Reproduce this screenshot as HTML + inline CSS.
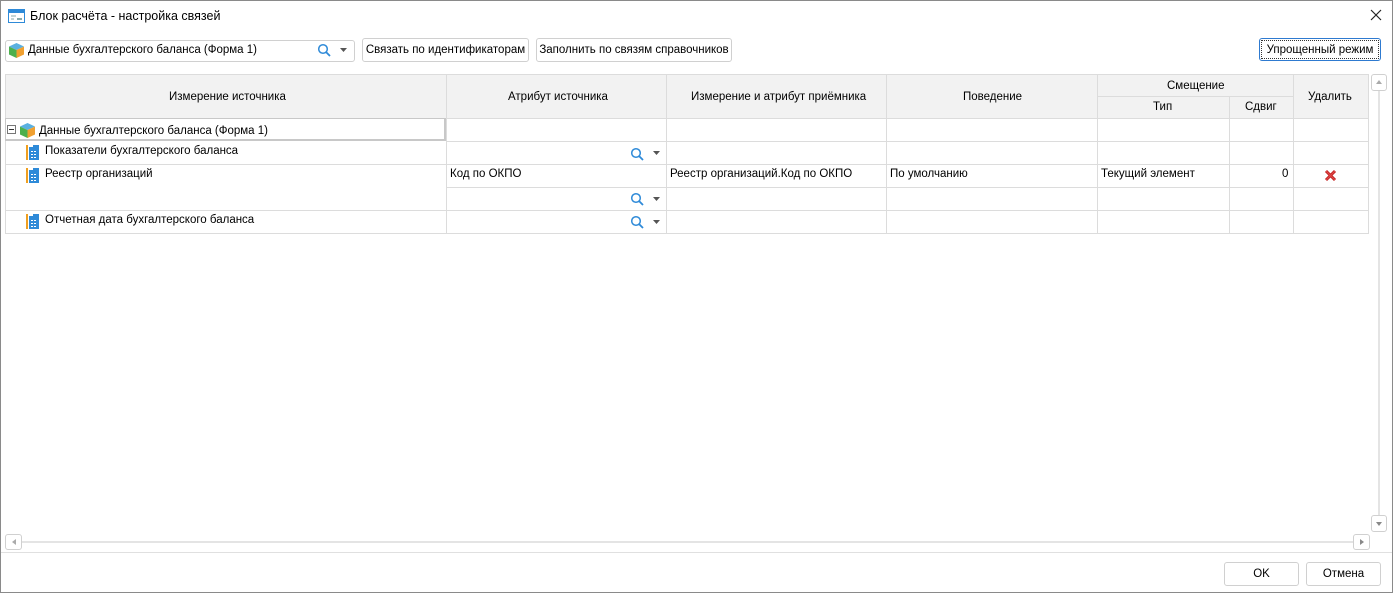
<!DOCTYPE html>
<html><head><meta charset="utf-8"><style>
*{box-sizing:border-box;margin:0;padding:0}
body{width:1393px;height:593px;background:#fff;font-family:"Liberation Sans",sans-serif;font-size:11.5px;color:#000;position:relative;overflow:hidden}
.win{position:absolute;left:0;top:0;width:1393px;height:593px;border:1px solid #8a8a8a}
.a{position:absolute}
.btn{position:absolute;border:1px solid #d0d0d0;border-radius:3px;background:#fff;text-align:center;line-height:22px;white-space:nowrap}
.vl{position:absolute;width:1px;background:#dcdcdc}
.hl{position:absolute;height:1px;background:#dcdcdc}
.t{position:absolute;white-space:nowrap}
</style></head><body><div class="win"></div>
<svg class="a" style="left:8px;top:8px" width="18" height="16"><rect x="0.5" y="1.5" width="16" height="13" fill="#fff" stroke="#2e8ad8"/><rect x="1" y="2" width="15" height="3" fill="#2e8ad8"/><line x1="3" y1="8" x2="8" y2="8" stroke="#8aa"/><line x1="3" y1="11" x2="6" y2="11" stroke="#8aa"/><rect x="9" y="10" width="5" height="2" fill="#8aa"/></svg>
<div class="t" style="left:30px;top:9px;font-size:12.5px">Блок расчёта - настройка связей</div>
<svg class="a" style="left:1370px;top:9px" width="12" height="12"><path d="M1 1L11 11M11 1L1 11" stroke="#222" stroke-width="1.2"/></svg>

<div class="btn" style="left:5px;top:40px;width:350px;height:22px;text-align:left"></div>
<svg class="a" style="left:8px;top:42px" width="17" height="17"><path d="M8.5 1L16 4.5 8.5 8 1 4.5Z" fill="#5ab0e0"/><path d="M1 4.5L8.5 8V16L1 12.5Z" fill="#4cb04c"/><path d="M16 4.5L8.5 8V16L16 12.5Z" fill="#f0a030"/></svg>
<div class="t" style="left:28px;top:44px">Данные бухгалтерского баланса (Форма 1)</div>
<svg class="a" style="left:317px;top:43px" width="14" height="14"><circle cx="6" cy="6" r="4.3" fill="none" stroke="#2e8ad8" stroke-width="1.5"/><line x1="9" y1="9" x2="13" y2="13" stroke="#2e8ad8" stroke-width="1.8"/></svg>
<svg class="a" style="left:340px;top:48px" width="7" height="4"><path d="M0 0H7L3.5 4Z" fill="#555"/></svg>
<div class="btn" style="left:362px;top:38px;width:167px;height:24px">Связать по идентификаторам</div>
<div class="btn" style="left:536px;top:38px;width:196px;height:24px">Заполнить по связям справочников</div>
<div class="btn" style="left:1259px;top:38px;width:122px;height:23px;border-color:#2e7ad0;line-height:19px"><div style="border:1px dotted #333;margin:1px;height:19px">Упрощенный режим</div></div>

<div class="a" style="left:5px;top:74px;width:1364px;height:44px;background:#f2f2f2"></div>
<div class="a" style="left:5px;top:74px;width:1364px;height:160px;border:1px solid #dcdcdc"></div>
<div class="hl" style="left:1097px;top:96px;width:196px"></div>
<div class="hl" style="left:5px;top:118px;width:1364px"></div>
<div class="hl" style="left:446px;top:141px;width:922px"></div>
<div class="hl" style="left:5px;top:164px;width:1364px"></div>
<div class="hl" style="left:446px;top:187px;width:922px"></div>
<div class="hl" style="left:5px;top:210px;width:1364px"></div>
<div class="vl" style="left:446px;top:74px;height:160px"></div>
<div class="vl" style="left:666px;top:74px;height:160px"></div>
<div class="vl" style="left:886px;top:74px;height:160px"></div>
<div class="vl" style="left:1097px;top:74px;height:160px"></div>
<div class="vl" style="left:1229px;top:96px;height:138px"></div>
<div class="vl" style="left:1293px;top:74px;height:160px"></div>
<div class="a" style="left:5px;top:118px;width:441px;height:23px;border:1px solid #c8c8c8;border-width:1px 2px 2px 1px"></div>

<div class="t" style="left:169px;top:91px">Измерение источника</div>
<div class="t" style="left:508px;top:91px">Атрибут источника</div>
<div class="t" style="left:691px;top:91px">Измерение и атрибут приёмника</div>
<div class="t" style="left:963px;top:91px">Поведение</div>
<div class="t" style="left:1167px;top:80px">Смещение</div>
<div class="t" style="left:1153px;top:101px">Тип</div>
<div class="t" style="left:1245px;top:101px">Сдвиг</div>
<div class="t" style="left:1308px;top:91px">Удалить</div>

<svg class="a" style="left:7px;top:125px" width="9" height="9"><rect x=".5" y=".5" width="8" height="8" fill="#fff" stroke="#777"/><line x1="2" y1="4.5" x2="7" y2="4.5" stroke="#333"/></svg>
<svg class="a" style="left:19px;top:122px" width="17" height="17"><path d="M8.5 1L16 4.5 8.5 8 1 4.5Z" fill="#5ab0e0"/><path d="M1 4.5L8.5 8V16L1 12.5Z" fill="#4cb04c"/><path d="M16 4.5L8.5 8V16L16 12.5Z" fill="#f0a030"/></svg>
<div class="t" style="left:39px;top:125px">Данные бухгалтерского баланса (Форма 1)</div>

<svg class="a" style="left:26px;top:145px" width="13" height="15"><rect x="0" y="0" width="2" height="15" fill="#f0a020"/><path d="M3 2H7V0H13V15H3Z" fill="#2e8ad8"/><g fill="#fff"><rect x="5" y="6" width="2" height="1"/><rect x="8" y="6" width="2" height="1"/><rect x="5" y="9" width="2" height="1"/><rect x="8" y="9" width="2" height="1"/><rect x="5" y="12" width="2" height="1"/><rect x="8" y="12" width="2" height="1"/></g></svg>
<div class="t" style="left:45px;top:145px">Показатели бухгалтерского баланса</div>
<svg class="a" style="left:26px;top:168px" width="13" height="15"><rect x="0" y="0" width="2" height="15" fill="#f0a020"/><path d="M3 2H7V0H13V15H3Z" fill="#2e8ad8"/><g fill="#fff"><rect x="5" y="6" width="2" height="1"/><rect x="8" y="6" width="2" height="1"/><rect x="5" y="9" width="2" height="1"/><rect x="8" y="9" width="2" height="1"/><rect x="5" y="12" width="2" height="1"/><rect x="8" y="12" width="2" height="1"/></g></svg>
<div class="t" style="left:45px;top:168px">Реестр организаций</div>
<svg class="a" style="left:26px;top:214px" width="13" height="15"><rect x="0" y="0" width="2" height="15" fill="#f0a020"/><path d="M3 2H7V0H13V15H3Z" fill="#2e8ad8"/><g fill="#fff"><rect x="5" y="6" width="2" height="1"/><rect x="8" y="6" width="2" height="1"/><rect x="5" y="9" width="2" height="1"/><rect x="8" y="9" width="2" height="1"/><rect x="5" y="12" width="2" height="1"/><rect x="8" y="12" width="2" height="1"/></g></svg>
<div class="t" style="left:45px;top:214px">Отчетная дата бухгалтерского баланса</div>

<svg class="a" style="left:630px;top:147px" width="14" height="14"><circle cx="6" cy="6" r="4.3" fill="none" stroke="#2e8ad8" stroke-width="1.5"/><line x1="9" y1="9" x2="13" y2="13" stroke="#2e8ad8" stroke-width="1.8"/></svg>
<svg class="a" style="left:653px;top:151px" width="7" height="4"><path d="M0 0H7L3.5 4Z" fill="#555"/></svg>
<svg class="a" style="left:630px;top:192px" width="14" height="14"><circle cx="6" cy="6" r="4.3" fill="none" stroke="#2e8ad8" stroke-width="1.5"/><line x1="9" y1="9" x2="13" y2="13" stroke="#2e8ad8" stroke-width="1.8"/></svg>
<svg class="a" style="left:653px;top:197px" width="7" height="4"><path d="M0 0H7L3.5 4Z" fill="#555"/></svg>
<svg class="a" style="left:630px;top:215px" width="14" height="14"><circle cx="6" cy="6" r="4.3" fill="none" stroke="#2e8ad8" stroke-width="1.5"/><line x1="9" y1="9" x2="13" y2="13" stroke="#2e8ad8" stroke-width="1.8"/></svg>
<svg class="a" style="left:653px;top:220px" width="7" height="4"><path d="M0 0H7L3.5 4Z" fill="#555"/></svg>

<div class="t" style="left:450px;top:168px">Код по ОКПО</div>
<div class="t" style="left:670px;top:168px">Реестр организаций.Код по ОКПО</div>
<div class="t" style="left:890px;top:168px">По умолчанию</div>
<div class="t" style="left:1101px;top:168px">Текущий элемент</div>
<div class="t" style="left:1282px;top:168px">0</div>
<svg class="a" style="left:1324px;top:169px" width="13" height="13"><path d="M2 2L11 11M11 2L2 11" stroke="#c02020" stroke-width="3"/><path d="M2 2L11 11M11 2L2 11" stroke="#e04848" stroke-width="1.2"/></svg>

<div class="a" style="left:1378px;top:90px;width:2px;height:428px;background:#e4e4e4"></div>
<div class="btn" style="left:1371px;top:74px;width:16px;height:17px"></div>
<svg class="a" style="left:1376px;top:80px" width="6" height="4"><path d="M0 4H6L3 0Z" fill="#aaa"/></svg>
<div class="btn" style="left:1371px;top:515px;width:16px;height:17px"></div>
<svg class="a" style="left:1376px;top:522px" width="6" height="4"><path d="M0 0H6L3 4Z" fill="#888"/></svg>
<div class="a" style="left:20px;top:541px;width:1335px;height:2px;background:#e4e4e4"></div>
<div class="btn" style="left:5px;top:534px;width:17px;height:16px"></div>
<svg class="a" style="left:12px;top:539px" width="4" height="6"><path d="M4 0V6L0 3Z" fill="#aaa"/></svg>
<div class="btn" style="left:1353px;top:534px;width:17px;height:16px"></div>
<svg class="a" style="left:1360px;top:539px" width="4" height="6"><path d="M0 0V6L4 3Z" fill="#888"/></svg>
<div class="hl" style="left:1px;top:552px;width:1391px;background:#e0e0e0"></div>

<div class="btn" style="left:1224px;top:562px;width:75px;height:24px">OK</div>
<div class="btn" style="left:1306px;top:562px;width:75px;height:24px">Отмена</div>
</body></html>
